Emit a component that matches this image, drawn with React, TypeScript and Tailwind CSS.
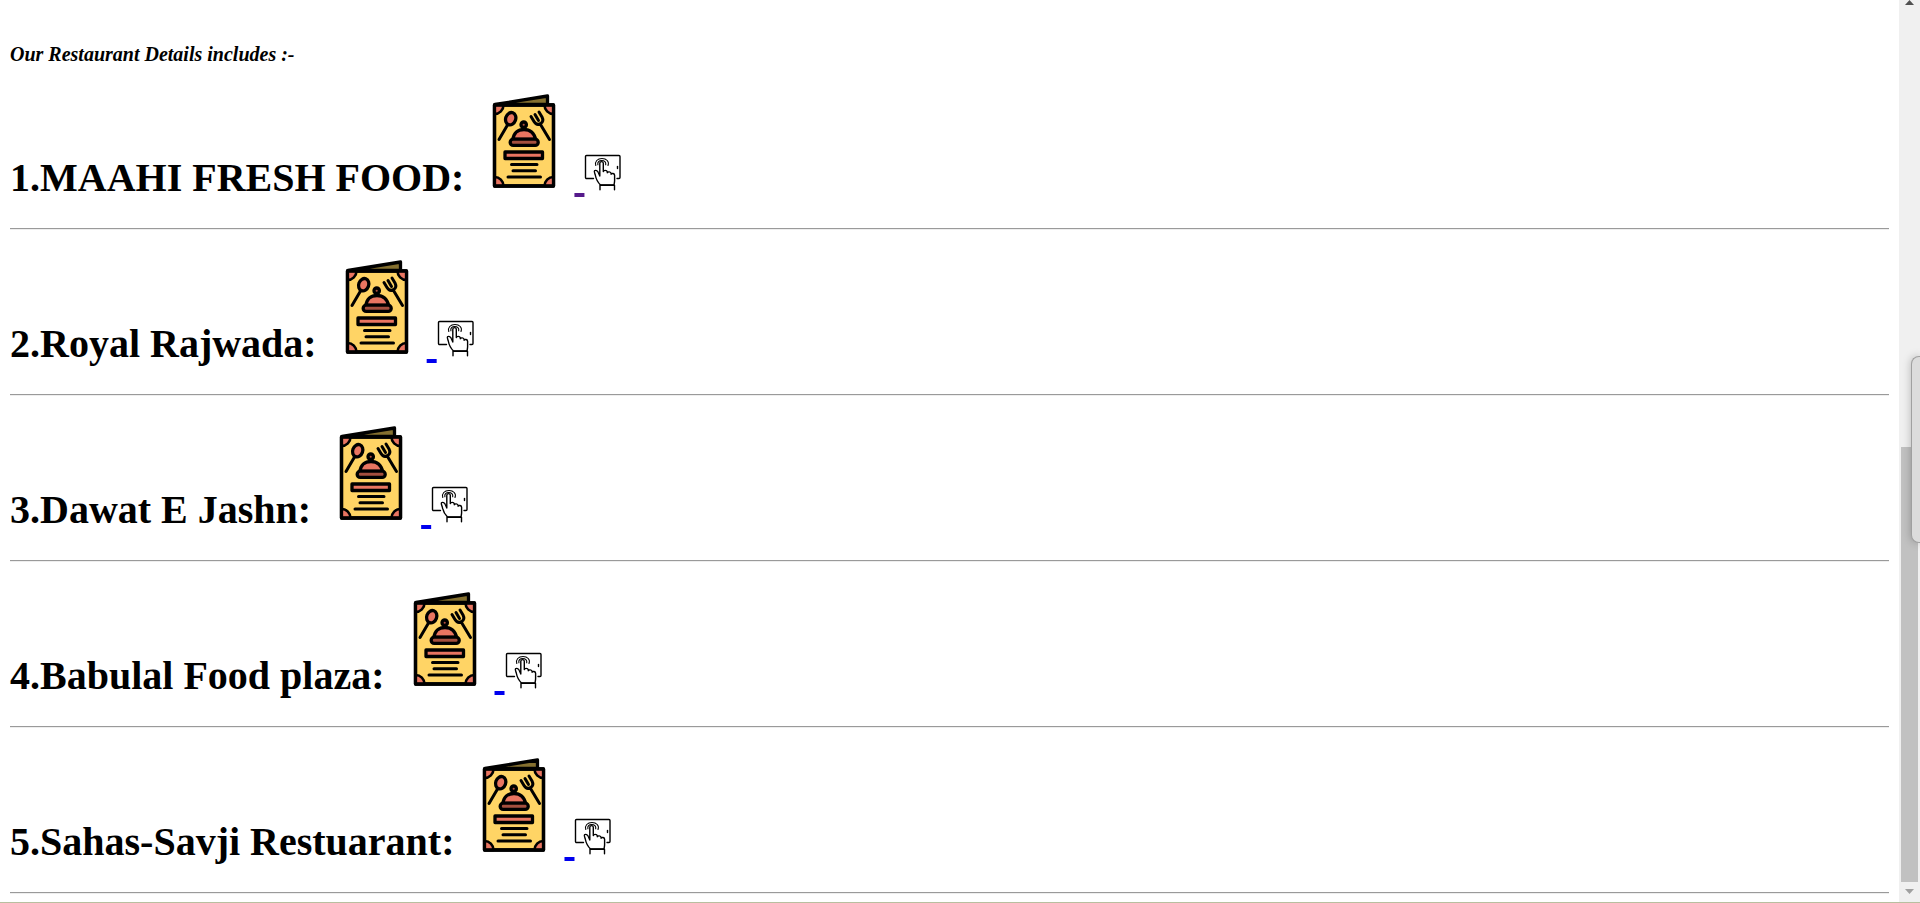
const restaurants = [
  { name: "1.MAAHI FRESH FOOD:", visited: true },
  { name: "2.Royal Rajwada:", visited: false },
  { name: "3.Dawat E Jashn:", visited: false },
  { name: "4.Babulal Food plaza:", visited: false },
  { name: "5.Sahas-Savji Restuarant:", visited: false },
];

function MenuIcon() {
  return (
    <svg
      className="inline-block size-[100px] align-baseline"
      viewBox="0 0 100 100"
      fill="none"
      stroke="#000"
      strokeWidth="3.300"
      strokeLinecap="round"
      strokeLinejoin="round"
      aria-hidden="true"
    >
      <path d="M21 13.500 73.500 5V13.500H21Z" fill="#85702f" />
      <path d="M20.500 14h59v81h-59Z" fill="#ffd465" />
      <path
        d="M20.500 14h9a9 9 0 0 1-9 9ZM79.500 14h-9a9 9 0 0 0 9 9ZM20.500 95h9a9 9 0 0 0-9-9ZM79.500 95h-9a9 9 0 0 1 9-9Z"
        fill="#e97561"
        strokeWidth="2.600"
      />
      <path d="M20.500 14h59v81h-59Z" />
      <path d="M33.500 34 25 48.500" strokeWidth="3" />
      <ellipse cx="36.700" cy="27.700" rx="5" ry="6.300" transform="rotate(20 36.700 27.700)" fill="#e97561" />
      <path d="m66.500 33.500 9 15M57 25.500l3 5c1.500 2.500 4 3.500 6.500 2.200 2.500-1.500 2.800-4.200 1.500-6.700l-3-5M61 23.500l3.500 6" strokeWidth="3" />
      <circle cx="49.700" cy="33.700" r="2.700" fill="#b4503f" />
      <path d="M39 48.500C39.500 42 44 38.500 50 38.500S60.500 42 61.500 48.500Z" fill="#e97561" />
      <rect x="36.200" y="48.200" width="28" height="6.200" rx="3" fill="#a44f3e" />
      <rect x="31" y="61" width="37.500" height="6.500" fill="#e97561" />
      <path d="M37.500 73.500h25.500M39 79.700h22.500M34 86h32.500" strokeWidth="3" />
    </svg>
  );
}

function TouchIcon() {
  return (
    <svg
      className="inline-block size-10 align-baseline"
      viewBox="0 0 40 40"
      fill="none"
      stroke="#000"
      strokeWidth="1.400"
      strokeLinecap="round"
      strokeLinejoin="round"
      aria-hidden="true"
    >
      <path d="M9.500 27.500H2.500a1 1 0 0 1-1-1V5.500a1 1 0 0 1 1-1H35a1 1 0 0 1 1 1V26.500a1 1 0 0 1-1 1h-2" />
      <path d="M33.500 15.500v2" />
      <path d="M11.800 14.500C10.500 10.500 13.500 7.500 18 7.500s7.500 3 6 7M13.900 13.800C13.300 11.300 15 9.500 17.700 9.500s4.600 1.800 4 4.300" strokeWidth="1.100" />
      <path d="M15.800 25V12.300c0-2.300 3.500-2.300 3.500 0V20.500c.300-1.500 3.500-1.500 4 .200v1c.500-1.300 3.500-1 3.800.600v1c.600-1.500 3.500-.900 3.500 1v5.200c0 2-.400 3-.600 4.500H16.500c-2.500-2.500-4.500-6-5.200-10-.300-1.500-1.500-3.500-.800-4.200 1-1 3.200 0 3.800 1.700l1.500 3.500" />
      <path d="M16 38.800v-4.500h14.500v4.500" />
    </svg>
  );
}

export default function App() {
  return (
    <div className="flex h-screen flex-col overflow-hidden bg-white font-['Liberation_Serif',serif] text-black">
      <div className="flex min-h-0 flex-1">
        <main className="min-w-0 flex-1 overflow-hidden pt-11 pr-[10px] pl-[10px]">
          <p className="text-[20px] leading-5 font-bold italic">Our Restaurant Details includes :-</p>
          {restaurants.map((r) => (
            <section key={r.name}>
              <h1 className="py-[27px] text-[40px] leading-[46px] font-bold whitespace-nowrap">
                {r.name} <MenuIcon />
                <a
                  href="#menu"
                  aria-label={r.name}
                  className={
                    r.visited
                      ? "text-[#551a8b] underline decoration-4"
                      : "text-[#0000ee] underline decoration-4"
                  }
                >
                  {" "}
                  <TouchIcon />
                </a>
              </h1>
              <hr className="h-[2px] border-t border-b border-t-[#9a9a9a] border-b-[#eeeeee]" />
            </section>
          ))}
        </main>
        <div className="relative flex w-[21px] flex-col items-center bg-[#f0f0f0]" aria-hidden="true">
          <svg className="h-[5px] w-[9px]" viewBox="0 0 9 5">
            <path d="M4.500 0 9 5H0Z" fill="#505050" />
          </svg>
          <div className="mt-[442px] h-[435px] w-[17px] bg-[#c1c1c1]" />
          <svg className="mt-[7px] h-[5px] w-[9px]" viewBox="0 0 9 5">
            <path d="M0 0h9L4.500 5Z" fill="#a0a0a0" />
          </svg>
          <div className="absolute top-[356px] right-0 h-[187px] w-[9px] rounded-l-lg border border-r-0 border-[#a0a0a0] bg-[#dcdcdc] shadow-[0_0_8px_rgba(0,0,0,0.25)]" />
        </div>
      </div>
      <div className="h-px bg-[#b8bfa0]" />
    </div>
  );
}
